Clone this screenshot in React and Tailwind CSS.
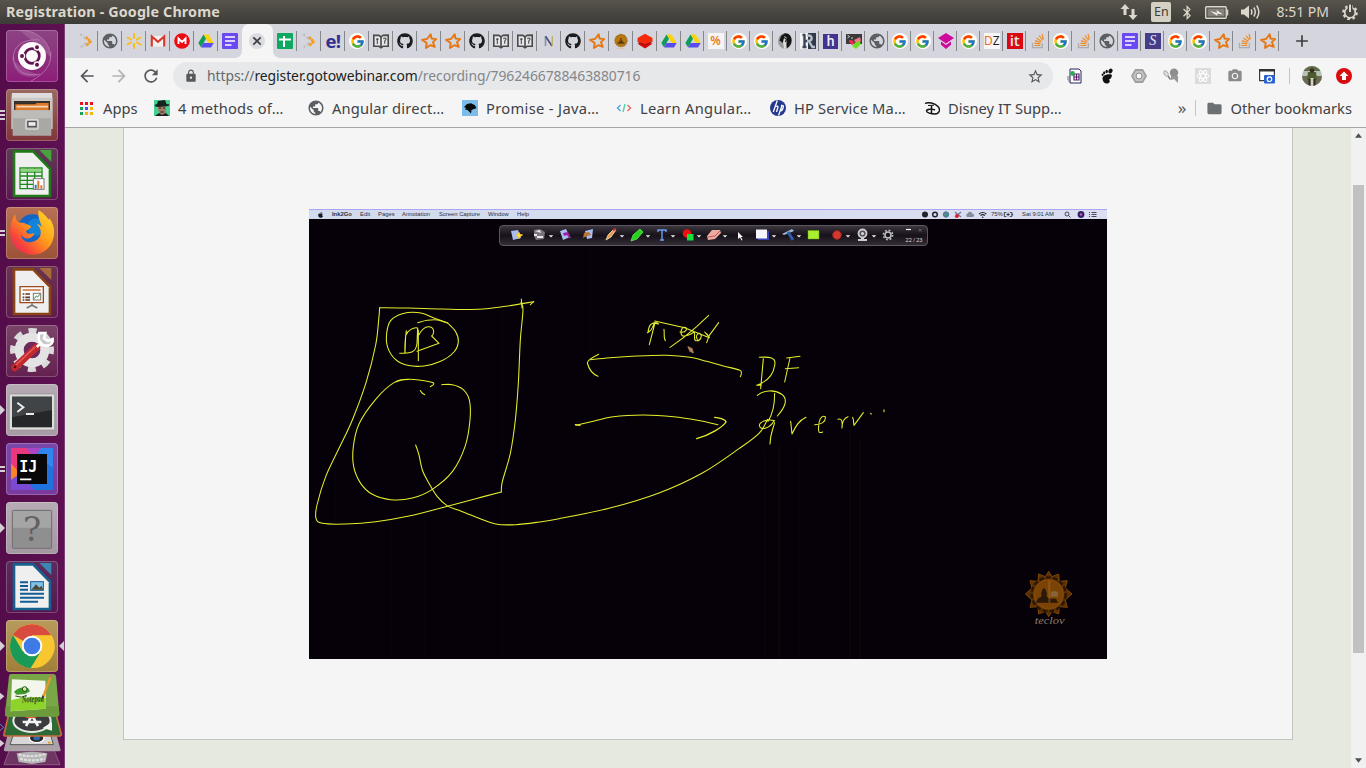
import React from "react";
import { FaGithub, FaBluetoothB } from "react-icons/fa";
import { FcGoogle } from "react-icons/fc";
import { MdPublic, MdArrowBack, MdArrowForward, MdRefresh, MdStarBorder, MdLock, MdAdd, MdFolder, MdCameraAlt } from "react-icons/md";

/* ---------- favicons ---------- */
const S = ({ children, vb = "0 0 16 16", c = "w-4 h-4" }) => (
  <svg viewBox={vb} className={c + " shrink-0"} fill="none">{children}</svg>
);
const Chevs = () => (
  <S>
    <path d="M2.500 1l2 2.200M4.200 12.800l-2 2.200M5.800 4l2.600 2.500M8.400 9.700L5.600 12.200" stroke="#b9b9bb" strokeWidth="2" strokeDasharray="2 .7" />
    <path d="M8 4l4.500 4.500L8 13" stroke="#f59a1c" strokeWidth="2.600" strokeDasharray="2.600 .5" />
  </S>
);
const Globe = () => (
  <span className="w-4 h-4 shrink-0 flex items-center justify-center"><MdPublic className="w-[18px] h-[18px] text-[#5b5f63] shrink-0" /></span>
);
const Spark = () => (
  <S>
    <g stroke="#fbbd1a" strokeWidth="2" strokeLinecap="round">
      <path d="M8 1v4M8 11v4M1.500 4.500l3.600 2M10.900 9.500l3.600 2M1.500 11.500l3.600-2M10.900 6.500l3.600-2" />
    </g>
  </S>
);
const Gmail = () => (
  <S>
    <path d="M1.500 3h13v10.500h-13z" fill="#f3f0f0" />
    <path d="M1.800 13.600V3.500L8 8.800l6.200-5.300v10.100" stroke="#d8382b" strokeWidth="2.100" />
  </S>
);
const RedM = () => (
  <S>
    <circle cx="8" cy="8" r="7.800" fill="#ee0a12" />
    <path d="M4.500 11V5.600L8 9l3.500-3.400V11" stroke="#fff" strokeWidth="1.900" />
  </S>
);
const Drive = () => (
  <S>
    <path d="M5.500 1.500h5L15.700 10h-5z" fill="#fbd20b" />
    <path d="M5.500 1.500L8 5.800 3 14.300.3 10z" fill="#0f9d58" />
    <path d="M5.400 10h10.300L13 14.400H3z" fill="#5b4cf0" />
  </S>
);
const Doc = () => (
  <S>
    <rect width="16" height="16" rx="1" fill="#6a48f2" />
    <path d="M3 4h10M3 8h10M3 12h6.500" stroke="#fff" strokeWidth="1.700" />
  </S>
);
const Sheet = () => (
  <S>
    <rect width="16" height="16" rx="1" fill="#0fa860" />
    <path d="M2 6.500h12M7 3v11" stroke="#fff" strokeWidth="2" />
  </S>
);
const Eb = () => <span className="text-[18.500px] leading-4 font-bold text-[#33308f] font-['Open_Sans',sans-serif] tracking-[-0.5px]">e!</span>;
const G = () => (
  <span className="w-4 h-4 rounded-full bg-white flex items-center justify-center shrink-0"><FcGoogle className="w-[15px] h-[15px]" /></span>
);
const Book = () => (
  <S>
    <path d="M.8 2.200l5.200.2 2 1.600 2-1.600 5.200-.2v11l-5.200.1-2 1.500-2-1.500-5.200-.1z" fill="#e7e7ea" stroke="#4a4a4a" strokeWidth="1.600" />
    <path d="M8 4v10.500" stroke="#4a4a4a" strokeWidth="1.600" /><path d="M4.300 5v6M3 6.300h2.600M10.500 6c.6-1.500 2.500-1.200 2.500 0s-1.500 1.300-1.300 3v1.800" stroke="#4a4a4a" strokeWidth="1.100" />
  </S>
);
const Git = () => <FaGithub className="w-4 h-4 text-[#1b1b1d] shrink-0" />;
const Star = () => (
  <S>
    <path d="M9.700 1.300l.8 4.200 4.700.6-3.300 3 1.900 4.800-4.500-1.700-4.300 2.800.7-5L1 6.900l5-.9z" stroke="#e67612" strokeWidth="1.900" strokeLinejoin="round" />
  </S>
);
const NIcon = () => (
  <S>
    <path d="M4.500 13V3.200" stroke="#8d93ab" strokeWidth="1.700" />
    <path d="M4.500 3.200L11 13" stroke="#4a5078" strokeWidth="1.700" />
    <path d="M11.300 13V3" stroke="#bfae6e" strokeWidth="1.400" />
  </S>
);
const Lotus = () => (
  <S>
    <circle cx="8" cy="7.500" r="5.900" fill="#b9780f" stroke="#a06d1c" strokeWidth="1.500" strokeDasharray="1.600 .5" />
    <path d="M4.500 10h7M8 5v3.500M6 8.500h4" stroke="#5a3c0c" strokeWidth="1.300" /><path d="M4 15.300h8" stroke="#d9c59a" />
  </S>
);
const RedStack = () => (
  <S>
    <path d="M8 7.500l7.500 3.200L8 15.500.5 10.700z" fill="#d90909" />
    <path d="M8 .8L15.500 5v3L8 11.500.5 8V5z" fill="#f52a0b" />
    <path d="M.5 8.500l7.500 3.600 7.500-3.600" stroke="#8f1212" strokeWidth=".9" />
  </S>
);
const Pct = () => (
  <span className="w-4 h-4 bg-[#f5f5f5] text-[#f07a14] text-[12px] leading-4 font-semibold text-center font-['Noto_Sans',sans-serif] shrink-0 flex justify-center">%</span>
);
const Head = () => (
  <S>
    <ellipse cx="8" cy="8" rx="7" ry="7.800" fill="#9a9a9c" />
    <path d="M8 .3c4.500 0 7 3.500 6.500 7.700-.3 3-2 5.500-4.500 7.200L8.500 9 6 10 2.500 7.500 4 3z" fill="#141414" />
    <path d="M7.500 3l2.500 2-1 10.500-2 .2L6 9z" fill="#dcdcdc" /><path d="M7 4.500l2.500 1.500-1 3" stroke="#222" strokeWidth="1.300" />
  </S>
);
const RIcon = () => (
  <S>
    <path d="M0 0h8v16H0z" fill="#f3f3f3" /><path d="M8 0h8v16H8z" fill="#2f3a4c" />
    <path d="M2.500 2h3M2.500 14h4M4.500 2v12M4.500 8h4" stroke="#39465a" strokeWidth="2.400" />
    <path d="M7 2.500h1.500c4.500 0 4 5.500 0 5.500H7M9 8.500l3.500 5.500h2.500" stroke="#b9c0c9" strokeWidth="2.300" />
  </S>
);
const HIcon = () => <span className="w-[15px] h-[15px] shrink-0 bg-[#43358f] text-[#f3effa] text-[14px] leading-[15px] text-center font-medium font-['Roboto',sans-serif]">h</span>;
const Pix = () => (
  <S>
    <rect width="16" height="10" y="1" fill="#3a3a3c" />
    <path d="M1.500 2l2 1.500-2 1.500M5 5h2" stroke="#ddd" strokeWidth=".9" />
    <path d="M8 7l6-3 1 4-4 4z" fill="#ee7a84" />
    <path d="M3 7l3 0 3 3-3 2-3-3z" fill="#f1274c" />
    <path d="M9 10l4-2 2 3-5 5-4-3z" fill="#6be11e" />
  </S>
);
const Pink = () => (
  <S>
    <path d="M8 0l8 5-8 5.500L0 5z" fill="#cd0a9c" />
    <path d="M3 8.500l5 3.400 5-3.400v3.200L8 16l-5-4.300z" fill="#cd0a9c" />
  </S>
);
const DZ = () => (
  <span className="w-4 h-4 shrink-0 bg-[#f6f6f6] text-[12px] leading-4 text-[#222] flex justify-center font-['Noto_Sans',sans-serif]"><span className="text-[#f26a1b]">D</span>Z</span>
);
const It = () => <span className="w-4 h-4 shrink-0 bg-[#da0812] text-[#e6e6e6] text-[15px] leading-[15px] font-semibold text-center font-['Open_Sans',sans-serif]">it</span>;
const SO = () => (
  <S>
    <path d="M2.500 10v4.600h9.800V10" stroke="#a9adb3" strokeWidth="1.300" />
    <path d="M4.300 12.500h6M4.400 10.200l6 .7M5 7.600l5.600 1.900M6.500 5l5 3.400M9 2.500l3.600 4.600M12 1l1.400 5.400" stroke="#ef8b22" strokeWidth="1.200" />
  </S>
);
const SIcon = () => <span className="w-4 h-4 shrink-0 bg-[#443d87] text-[#ece9f6] text-[14px] leading-[15px] italic text-center font-['Liberation_Serif',serif]">S</span>;

const tabsA = [Chevs, Globe, Spark, Gmail, RedM, Drive, Doc];
const tabsB = [Sheet, Chevs, Eb, G, Book, Git, Star, Star, Git, Book, Book, NIcon, Git, Star, Lotus, RedStack, Drive];
const tabsC = [Drive, Pct, G, G, Head, RIcon, HIcon, Pix, Globe, G, G, Pink, G, DZ, It, SO, G, SO, Globe, Doc, SIcon, G, G, Star, SO, Star];

const Tab = ({ I, w, last }) => (
  <div className={"h-5 flex items-center shrink-0 justify-center border-r pl-px " + w + (last ? " border-transparent" : " border-[#85878b]")}><I /></div>
);

function TabStrip() {
  return (
    <div className="h-[34px] bg-[#d5d6dd] flex items-center pl-[9px] shrink-0">
      {tabsA.map((I, i) => <Tab key={i} I={I} w="w-[24px]" last={i === 6} />)}
      <div className="w-[31px] h-[34px] relative flex items-center justify-center bg-[#f5f5f5] rounded-t-[7px]">
        <svg className="absolute -left-[7px] bottom-0 w-[7px] h-[7px]" viewBox="0 0 7 7"><path d="M7 0v7H0a7 7 0 0 0 7-7z" fill="#f5f5f5" /></svg>
        <svg className="absolute -right-[7px] bottom-0 w-[7px] h-[7px]" viewBox="0 0 7 7"><path d="M0 0v7h7a7 7 0 0 1-7-7z" fill="#f5f5f5" /></svg>
        <span className="w-4 h-4 rounded-full bg-[#dcdde0] flex items-center justify-center mr-px">
          <S c="w-[10px] h-[10px]" vb="0 0 10 10"><path d="M1.300 1.300l7.400 7.400M8.700 1.300L1.300 8.700" stroke="#3f4246" strokeWidth="1.700" /></S>
        </span>
      </div>
      {tabsB.map((I, i) => <Tab key={i} I={I} w="w-[24px]" />)}
      {tabsC.map((I, i) => <Tab key={i} I={I} w="w-[23.020px]" />)}
      <MdAdd className="w-[20px] h-[20px] text-[#3b3e42] ml-[13px]" />
    </div>
  );
}

function Toolbar() {
  return (
    <div className="h-9 flex items-center shrink-0 text-[#55585c]">
      <MdArrowBack className="w-5 h-5 ml-[12px]" />
      <MdArrowForward className="w-5 h-5 ml-[12px] text-[#b3b4b6]" />
      <MdRefresh className="w-5 h-5 ml-[12px]" />
      <div className="ml-[12px] w-[880px] h-7 rounded-full bg-[#e7e8ea] flex items-center">
        <MdLock className="w-[14px] h-[14px] ml-[11px]" />
        <div className="ml-[9px] text-[13.900px] tracking-[-0.060px] leading-7 text-[#83868a] flex-1 whitespace-nowrap">
          <span className="text-[#66696e]">https://</span><span className="text-[#1d1f22]">register.gotowebinar.com</span>/recording/7962466788463880716
        </div>
        <MdStarBorder className="w-[17px] h-[17px] mr-[9px]" />
      </div>
      <div className="flex items-center gap-4 ml-[14px]">
        <S>
          <path d="M3 1h9l2 2v12H3z" fill="#fff" stroke="#26265e" />
          <path d="M7 6h5v6H7zM9.500 6v6M7 9h5" stroke="#5a1d6e" strokeWidth="1.200" />
          <circle cx="5.500" cy="5.500" r="2.400" fill="#2fa65a" /><path d="M0 9h4M0 11h3M1 13h3" stroke="#777" />
        </S>
        <S>
          <ellipse cx="3.600" cy="6.800" rx="1" ry="1.200" fill="#111" /><ellipse cx="5.200" cy="4.800" rx="1.100" ry="1.500" fill="#111" />
          <ellipse cx="7.700" cy="3.500" rx="1.200" ry="1.700" fill="#111" /><ellipse cx="11.500" cy="3" rx="2" ry="2.500" transform="rotate(25 11.500 3)" fill="#111" />
          <path d="M12.500 6.500C9 5.500 3.500 7 3.500 10.500S6 16 8.500 15.500s3-2.800 1.200-4c2 .2 4-3.500 2.800-5z" fill="#111" />
        </S>
        <S><path d="M4 1h8l4 7-4 7H4L0 8z" fill="#9f9f9f" /><path d="M5 3h6l3 5-3 5H5L2 8z" fill="#c4c4c4" /><circle cx="8" cy="8" r="3" fill="#f5f5f5" stroke="#8c8c8c" /></S>
        <S><circle cx="11" cy="4.800" r="4.200" fill="#8e8e8e" /><path d="M8 8l7 0v7l-4-4-3 1z" fill="#979797" /><ellipse cx="3" cy="5.500" rx="1.700" ry="3" transform="rotate(-35 3 5.500)" fill="#e2e2e2" stroke="#a9a9a9" /><path d="M5 8l2.500 3.500" stroke="#777" strokeWidth="1.300" /></S>
        <S>
          <rect width="16" height="16" fill="#dcdcdc" />
          <g stroke="#fff"><ellipse cx="8" cy="8" rx="6" ry="2.300" /><ellipse cx="8" cy="8" rx="6" ry="2.300" transform="rotate(60 8 8)" /><ellipse cx="8" cy="8" rx="6" ry="2.300" transform="rotate(120 8 8)" /></g>
        </S>
        <MdCameraAlt className="w-4 h-4 text-[#8b8b8b]" />
        <S><path d="M.6 1.600h14.800v11H.6z" fill="#fff" stroke="#3c3c3c" strokeWidth="1.200" /><path d="M0 1h16v2.500H0z" fill="#333" /><rect x="5" y="7" width="11" height="8.500" rx="1" fill="#2c62d0" /><circle cx="10.500" cy="11.200" r="2.300" stroke="#fff" strokeWidth="1.200" /></S>
      </div>
      <div className="w-px h-4 bg-[#c3c4c6] ml-[14px]" />
      <S c="w-5 h-5 ml-[12px]" vb="0 0 20 20">
        <clipPath id="av"><circle cx="10" cy="10" r="10" /></clipPath>
        <g clipPath="url(#av)"><rect width="20" height="20" fill="#b4c0b4" /><path d="M0 10h20v10H0z" fill="#6b6b55" /><path d="M0 0h20v5H0z" fill="#5f6d48" /><path d="M6 6h8l1 8H5z" fill="#4e5a30" /><circle cx="10" cy="4.500" r="2.300" fill="#3d2c20" /><path d="M8.500 12h3v8h-3z" fill="#d6cfc0" /><path d="M6.500 13h2v7h-2zM11.500 13h2v7h-2z" fill="#33302a" /></g>
      </S>
      <S c="w-4 h-4 ml-[14px]"><circle cx="8" cy="8" r="8" fill="#d90d10" /><path d="M8 3.500l4.500 4.500H10v4H6V8H3.500z" fill="#fff" /></S>
    </div>
  );
}

const Man = () => (
  <S><rect width="16" height="16" fill="#45d093" /><path d="M4 5h8v8l-3 2-3-1-2-4z" fill="#a17c68" /><path d="M4 1l7-1 1.500 4 3 .5-1 1.500-10 1-3-.5-1-1.500 2.500-1z" fill="#16241f" /><path d="M5 8h2M9 8h2M6.500 12h3" stroke="#2d1a14" /><path d="M1 16l4-3 3 2 4-2 3 3z" fill="#1e1e22" /></S>
);
const Moz = () => (
  <S><rect width="16" height="16" fill="#7cbcea" /><path d="M2 7l3-3 4-.7 4 2 1.500 3-2.500.7-2.500 1-.5 3.500-3.500-3.500L3 9.500l1-1.500z" fill="#0a0a0a" /></S>
);
const Code = () => (
  <S><path d="M4.500 5L1.500 8l3 3" stroke="#49a7e0" strokeWidth="1.400" /><path d="M9 4l-2 8" stroke="#45d3a5" strokeWidth="1.300" /><path d="M11.500 5l3 3-3 3" stroke="#f0656c" strokeWidth="1.400" /></S>
);
const HP = () => (
  <S><circle cx="8" cy="8" r="8" fill="#26388f" /><path d="M7.300.5L3.300 12M5.300 6.500c2.500-1 3-.3 2.500 1.200L6.500 12M8.500 15.500L12 5.500M11 5.500c3-.4 2.600.8 2 2.700s-1 3-3.500 2.800" stroke="#fff" strokeWidth="1.300" /></S>
);
const Disney = () => (
  <S c="w-4 h-4 relative top-px"><path d="M1 2.500C4 .8 11 2 14 5.500s1 7.500-3 7.500-8.500-1.200-8.500-3S8 7.500 11 9" stroke="#111" strokeWidth="1.400" /><path d="M7.500 5v8" stroke="#111" strokeWidth="1.500" /><path d="M4 4.500l6-.3" stroke="#111" /></S>
);
const marks = [
  [Man, "4 methods of…", "tracking-[0.230px]"], [Globe, "Angular direct…", "tracking-[0.200px]"], [Moz, "Promise - Java…", "tracking-[0.330px]"],
  [Code, "Learn Angular…", "tracking-[0.300px]"], [HP, "HP Service Ma…", "tracking-[0.150px]"], [Disney, "Disney IT Supp…", ""],
];
const appColors = ["#e8121d", "#e8121d", "#e8121d", "#10a458", "#5a4bf0", "#f3b70a", "#10a458", "#f3b70a", "#f3b70a"];

function Bookmarks() {
  return (
    <div className="h-[34px] border-b border-[#a5a6a6] flex items-center pb-[5px] text-[14.700px] text-[#3f4247] shrink-0 whitespace-nowrap pl-[15px] pr-[14px]">
      <svg viewBox="0 0 13 13" className="w-[13px] h-[13px]">
        {appColors.map((c, i) => <rect key={i} x={(i % 3) * 5} y={Math.floor(i / 3) * 5} width="3" height="3" fill={c} />)}
      </svg>
      <span className="ml-[10px] w-[51px]">Apps</span>
      {marks.map(([I, t, tr]) => (
        <div key={t} className="w-[154px] flex items-center gap-2 shrink-0"><I /><span className={tr}>{t}</span></div>
      ))}
      <span className="ml-auto text-[17px] leading-4 text-[#55585c]">»</span>
      <span className="w-px h-4 bg-[#c3c4c6] ml-[9px]" />
      <MdFolder className="w-[17px] h-[17px] ml-[10px] text-[#6c7074]" />
      <span className="ml-[7px]">Other bookmarks</span>
    </div>
  );
}

/* ---------- top panel ---------- */
function Panel() {
  return (
    <div className="h-6 shrink-0 bg-gradient-to-b from-[#57544c] to-[#3d3b37] flex items-center text-[#dcd7cc] pl-[6px] pr-[8px]">
      <span className="text-[14.300px] font-bold leading-6 tracking-[0.150px]">Registration - Google Chrome</span>
      <div className="ml-auto flex items-center">
        <S c="w-[18px] h-4" vb="0 0 18 16"><path d="M5 0l4.500 5h-3v6h-3V5h-3zM13 16l-4.500-5h3V5h3v6h3z" fill="#dcd7cc" /></S>
        <span className="ml-[13px] w-5 h-5 rounded-[2px] bg-[#d5d0c4] text-[#3f3d38] text-[12.500px] leading-5 text-center">En</span>
        <FaBluetoothB className="w-[14px] h-[15px] ml-[9px]" />
        <S c="w-[24px] h-[13px] ml-[11px]" vb="0 0 24 13"><rect x=".7" y=".7" width="20.500" height="11.600" rx="1" stroke="#dcd7cc" strokeWidth="1.400" /><rect x="2.500" y="2.500" width="17" height="8" fill="#85827a" /><path d="M22.500 3.500v6" stroke="#dcd7cc" strokeWidth="1.500" /><path d="M5 5l7 2-.5-3L18 8.500l-6-1 .5 2.500z" fill="#f4f1ea" /></S>
        <S c="w-[20px] h-[16px] ml-[12px]" vb="0 0 20 16"><path d="M0 5.500h3L8 1.500v13L3 10.500H0z" fill="#dcd7cc" /><path d="M10 5.500q1.800 2.500 0 5M12.800 3.500q3 4.500 0 9M15.700 1.500q4.300 6.500 0 13" stroke="#dcd7cc" strokeWidth="1.500" /></S>
        <span className="ml-[15px] text-[14px] leading-6 whitespace-nowrap">8:51 PM</span>
        <S c="w-4 h-4 ml-[13px]"><circle cx="8" cy="8.500" r="6.700" stroke="#dcd7cc" strokeWidth="2.200" strokeDasharray="2.630 2.630" /><circle cx="8" cy="8.500" r="5.300" stroke="#dcd7cc" strokeWidth="1.700" /><path d="M8 0v8" stroke="#45433e" strokeWidth="4.600" /><path d="M8 .5V8" stroke="#dcd7cc" strokeWidth="2" /></S>
      </div>
    </div>
  );
}

/* ---------- launcher ---------- */
const Tile = ({ bg, pips = 0, active, children }) => (
  <div className="w-[65px] h-[52px] flex items-center shrink-0">
    <div className="w-[6px] flex flex-col items-start gap-[2px]">
      {pips === 1 && <svg className="w-[5px] h-[10px]" viewBox="0 0 5 10"><path d="M0 0l5 5-5 5z" fill="#d4cfd4" /></svg>}
      {pips > 1 && Array.from({ length: pips }, (_, i) => <i key={i} className="block w-[5px] h-[2px] bg-[#d4cfd4]" />)}
    </div>
    <div className={"w-[52px] h-[52px] rounded-[4px] overflow-hidden shadow-[inset_0_0_0_1px_rgba(255,255,255,.22)] " + bg}>
      <svg viewBox="0 0 156 156" className="w-[52px] h-[52px]" fill="none">{children}</svg>
    </div>
    {active && <svg className="w-[5px] h-[10px] ml-[1px]" viewBox="0 0 5 10"><path d="M5 0L0 5l5 5z" fill="#d4cfd4" /></svg>}
  </div>
);

const Launcher = () => (
  <div className="w-[65px] shrink-0 bg-gradient-to-r from-[#540c4a] to-[#5e1152] border-r border-[#7a4272] flex flex-col gap-[7px] pt-[6px]">
    <Tile bg="bg-gradient-to-b from-[#8b4383] to-[#8d1c7a]">
      <path d="M36 0C90 0 130 30 134 80M134 66c4 40-20 66-60 88M22 92C18 50 50 26 100 30M22 80c4 50 40 60 80 52" stroke="#c58dbd" strokeWidth="3" opacity=".65" />
      <path d="M40 0C100 4 134 40 132 80L110 60zM22 92C22 130 60 150 100 136L60 120z" fill="#c58dbd" opacity=".3" />
      <circle cx="78" cy="78" r="42" fill="#fbf9fa" />
      <circle cx="78" cy="78" r="22" stroke="#5d1450" strokeWidth="8" />
      <g stroke="#fbf9fa" strokeWidth="4" fill="#5d1450"><circle cx="48" cy="78" r="8" /><circle cx="93" cy="52" r="8" /><circle cx="93" cy="104" r="8" /></g>
    </Tile>
    <Tile bg="bg-gradient-to-b from-[#9b6a62] to-[#80343a]" pips={3}>
      <path d="M18 12h120l2 18v90H16V30z" fill="#c9c8c5" /><path d="M18 12h120v14H18z" fill="#dedddb" /><path d="M24 36h108v30H24z" fill="#3a302b" />
      <path d="M28 46h60l4-4h36v24H28z" fill="#dd7a2c" /><path d="M32 53h94" stroke="#f6d7b5" strokeWidth="5" />
      <path d="M20 64h116v76H20z" fill="#a9a8a5" /><path d="M20 64h116v24H20z" fill="#bdbcb9" />
      <rect x="60" y="92" width="36" height="28" rx="4" stroke="#d9d9d7" strokeWidth="5" fill="#8f8e8c" /><rect x="66" y="98" width="24" height="14" fill="#eee" stroke="#444" strokeWidth="3" />
    </Tile>
    <Tile bg="bg-gradient-to-b from-[#5f3a55] to-[#5c1552]">
      <path d="M20 6h62l54 54v88H20z" fill="#1d7a17" /><path d="M28 14h52l48 50v76H28z" fill="#efefef" /><path d="M100 6h36v36z" fill="#46a43a" />
      <path d="M42 60h66v62H42zM42 72h66M42 84h66M42 97h66M42 109h66M64 60v62M86 60v62" stroke="#1c8a1c" strokeWidth="4" /><path d="M44 62h62v9H44z" fill="#8fd67f" />
      <rect x="82" y="92" width="32" height="32" fill="#fff" stroke="#777" strokeWidth="3" /><path d="M97 122V98M106 122v-10" stroke="#e0762c" strokeWidth="6" /><path d="M89 122v-12" stroke="#2f7cc2" strokeWidth="6" />
    </Tile>
    <Tile bg="bg-gradient-to-b from-[#b87155] to-[#9b5338]" pips={2}>
      <defs><linearGradient id="ff" x1="1" y1="0" x2="0" y2="1"><stop stopColor="#ffe226" /><stop offset=".45" stopColor="#ff9a1d" /><stop offset=".75" stopColor="#f9433b" /><stop offset="1" stopColor="#d81a78" /></linearGradient></defs>
      <circle cx="80" cy="68" r="46" fill="#1166c8" /><circle cx="90" cy="60" r="26" fill="#14a0e8" opacity=".5" />
      <path d="M28 22c0 14 4 20 8 24l18 2 22 10c-4 10-14 10-16 16 4 8 20 8 26 4-8 22-34 22-40 4-2 26 40 34 56 6 6-16 0-28-10-38 12 4 14 8 16 10-8-22-14-34-10-50 10 4 26 22 30 28l2-4c20 24 16 58 6 76-22 38-72 44-104 14C4 94 10 44 28 22z" fill="url(#ff)" />
    </Tile>
    <Tile bg="bg-gradient-to-b from-[#6a3450] to-[#5f1b4c]">
      <path d="M20 6h62l54 54v88H20z" fill="#8a4413" /><path d="M28 14h52l48 50v76H28z" fill="#efefef" /><path d="M100 6h36v36z" fill="#a86b3d" />
      <path d="M42 62h70v48H42z" fill="#fbfbfb" stroke="#a04a1a" strokeWidth="4" /><path d="M50 72h54" stroke="#c8703a" strokeWidth="5" /><path d="M50 84h22M50 94h22M50 102h22" stroke="#5a3626" strokeWidth="5" strokeDasharray="5 3 14" /><rect x="82" y="82" width="22" height="20" stroke="#777" strokeWidth="3" /><path d="M85 98l6-8 4 3 6-8" stroke="#27953a" strokeWidth="3" /><path d="M78 112v6L62 126M78 118l16 8" stroke="#777" strokeWidth="5" />
    </Tile>
    <Tile bg="bg-gradient-to-b from-[#7a4568] to-[#642050]">
      <circle cx="78" cy="75" r="57" stroke="#dadada" strokeWidth="18" strokeDasharray="24 20.760" strokeDashoffset="12" /><circle cx="78" cy="75" r="38" stroke="#e3e3e3" strokeWidth="28" /><circle cx="78" cy="75" r="25" fill="#6d2b5c" />
      <path d="M26 128l66-62" stroke="#c3282c" strokeWidth="21" strokeLinecap="round" /><path d="M30 120l58-55" stroke="#e25a58" strokeWidth="5" />
      <path d="M92 66l16-14M100 24c-6 20 2 38 22 38 12 0 20-10 18-20l-14 6-12-8 4-16z" stroke="#fff" strokeWidth="8" fill="#c8c8c8" /><circle cx="27" cy="126" r="4" fill="#5e0c10" />
    </Tile>
    <Tile bg="bg-gradient-to-b from-[#b6a9b3] to-[#a79ba6]" pips={1}>
      <rect x="10" y="30" width="136" height="108" rx="4" fill="#dcdcdc" stroke="#8f8f8f" strokeWidth="2" /><rect x="18" y="38" width="120" height="92" fill="#252729" /><path d="M18 38h120v40L18 100z" fill="#414446" />
      <path d="M34 56l18 14-18 14M60 90h24" stroke="#ececec" strokeWidth="6" />
    </Tile>
    <Tile bg="bg-gradient-to-b from-[#7a48aa] to-[#7a3a9c]" pips={2}>
      <path d="M15 15h126v126H15z" fill="#1f72df" /><path d="M15 15h80L60 80 15 120z" fill="#e9387e" /><path d="M15 62l30 30-30 30z" fill="#f98426" /><path d="M15 110l30-20 40 51H15z" fill="#7a4ad2" /><path d="M100 15h41v60L95 40z" fill="#2f86f0" /><path d="M60 15h45l-20 30z" fill="#a946c4" />
      <rect x="33" y="33" width="90" height="90" fill="#080808" /><path d="M42 109h34" stroke="#fff" strokeWidth="5" />
      <text x="40" y="86" fontSize="50" fontWeight="bold" fontFamily="DejaVu Sans Mono, monospace" fill="#fff" textLength="54" lengthAdjust="spacingAndGlyphs">IJ</text>
    </Tile>
    <Tile bg="bg-gradient-to-b from-[#b7abb5] to-[#a398a1]" pips={1}>
      <rect x="19" y="25" width="118" height="114" rx="3" fill="#8f8f8f" stroke="#6f6f6f" strokeWidth="3" /><path d="M21 27h114v50H21z" fill="#a5a5a5" />
      <text x="78" y="117" textAnchor="middle" fontSize="102" fontFamily="DejaVu Serif, serif" fill="#616161">?</text>
    </Tile>
    <Tile bg="bg-gradient-to-b from-[#5c2c5e] to-[#561650]">
      <path d="M20 6h62l54 54v88H20z" fill="#16608f" /><path d="M28 14h52l48 50v76H28z" fill="#efefef" /><path d="M100 6h36v36z" fill="#3c86b4" />
      <path d="M42 64h24M42 75h24M42 86h24M42 98h72M42 110h72M42 122h54" stroke="#145c94" strokeWidth="6" /><rect x="74" y="62" width="38" height="26" fill="#7fc1e8" stroke="#145c94" strokeWidth="3" /><path d="M76 86l14-16 10 10 6-6 6 12z" fill="#4c4a32" />
    </Tile>
    <Tile bg="bg-gradient-to-b from-[#b79a5c] to-[#a17f38]" pips={1} active>
      <circle cx="78" cy="78" r="66" fill="#f8c62f" /><path d="M78 78L21 45A66 66 0 0 1 135 46L78 46z" fill="#d84b3e" /><path d="M21 45A66 66 0 0 0 74 144L106 94 78 78 50 94z" fill="#1a9a57" /><path d="M78 47h60A66 66 0 0 1 76 144L105 94z" fill="#f8c62f" />
      <circle cx="78" cy="78" r="31" fill="#fff" /><circle cx="78" cy="78" r="25" fill="#3e7be4" />
    </Tile>
    <svg viewBox="0 528 195 282" className="w-[65px] h-[94px] -mt-[5px] shrink-0" fill="none">
      <path d="M28 756h134l18 44H12z" fill="#6e3562" stroke="#8d5b84" strokeWidth="3" /><path d="M50 766q46-10 92 0l-6 26-40 6-40-6z" fill="#b4b4b4" /><path d="M56 770q40 10 80-2M60 782q36 10 74 0" stroke="#dedede" strokeWidth="7" strokeDasharray="9 3" />
      <path d="M24 706h144l14 50q0 4-6 4H16q-6 0-4-6z" fill="#aba2a8" /><path d="M40 710h112l8 30H30z" fill="#d8d6d6" stroke="#555" strokeWidth="3" /><ellipse cx="110" cy="720" rx="22" ry="14" fill="#282828" stroke="#fff" strokeWidth="4" /><ellipse cx="110" cy="720" rx="10" ry="7" fill="#2b68a8" /><path d="M144 734h8" stroke="#e5a020" strokeWidth="5" />
      <path d="M26 650h142l16 58q0 6-6 6H16q-6 0-4-6z" fill="#2d6a35" stroke="#c96a3d" strokeWidth="5" /><ellipse cx="96" cy="668" rx="56" ry="34" fill="#3b3b3d" stroke="#e9e9e9" strokeWidth="6" /><path d="M78 684l18-32 18 32M68 672h56" stroke="#f2f2f2" strokeWidth="8" /><path d="M76 660l14-14 20 14z" fill="#e2582e" /><path d="M128 690l28-18v26z" fill="#f2f2f2" />
      <path d="M34 528h126q6 0 8 6l10 114q0 8-8 8H22q-8 0-7-8l12-114q1-6 7-6z" fill="#79a646" /><path d="M15 645l2-20h159l2 20q0 10-8 10H22q-7 0-7-10z" fill="#6b9b3b" />
      <path d="M36 544l100 4 2 84-106 8z" fill="#f3f6ea" /><path d="M34 606q50-14 103-6l1 32-106 8z" fill="#8ed32a" /><path d="M42 582q14-18 42-12l6 10-14 8-26 2z" fill="#3f9a2c" /><circle cx="74" cy="573" r="7" fill="#cdf0a5" stroke="#264e17" strokeWidth="3" /><path d="M46 594q20 8 34-2" stroke="#264e17" strokeWidth="3" />
      <text x="66" y="614" fontSize="30" fontStyle="italic" fontWeight="bold" fontFamily="Liberation Serif, serif" fill="#1e4a22" textLength="66" lengthAdjust="spacingAndGlyphs" transform="rotate(-3 66 614)">Notepad</text>
      <path d="M152 536L130 596" stroke="#e29a2e" strokeWidth="7" /><path d="M148 534l8 4" stroke="#e06a50" strokeWidth="7" /><path d="M127 592l-3 14 9-10z" fill="#333" />
      <path d="M0 584l13 11-13 11zM0 725l13 11-13 11z" fill="#d4cfd4" /><path d="M0 678l11 10-11 10" stroke="#4c8fd0" strokeWidth="3" />
    </svg>
  </div>
);

/* ---------- recorded video frame ---------- */
const Caret = ({ x }) => <path d={`M${x - 2.3} 9.300h4.600l-2.300 2.300z`} fill="#f0f0f0" />;

/* Smooth stroke through a flat list of points. */
function curve(p) {
  const n = p.length / 2;
  const at = (i) => { const k = Math.max(0, Math.min(n - 1, i)); return [p[2 * k], p[2 * k + 1]]; };
  let d = `M${p[0]} ${p[1]}`;
  for (let i = 0; i < n - 1; i++) {
    const [a, b, c, e] = [at(i - 1), at(i), at(i + 1), at(i + 2)];
    d += `C${b[0] + (c[0] - a[0]) / 6} ${b[1] + (c[1] - a[1]) / 6} ${c[0] - (e[0] - b[0]) / 6} ${c[1] - (e[1] - b[1]) / 6} ${c[0]} ${c[1]}`;
  }
  return d;
}
const Stroke = ({ p }) => <path d={curve(p)} />;

function Video() {
  return (
    <div className="w-[798px] h-[450px] bg-[#060008] flex flex-col relative overflow-hidden font-['Liberation_Sans',sans-serif]">
      <div className="h-[10px] shrink-0 border-t border-[#aaa6f4] bg-gradient-to-r from-[#d2dbee] to-[#dadef0] flex items-center text-[5.850px] leading-[9px] text-[#2a2f3e] pl-[9px] pr-[9px] whitespace-nowrap">
        <S c="w-[5px] h-[6px]" vb="0 0 10 12"><path d="M5 3.500C2 2 0 4 .5 7S3 12 5 11.300C7 12 9 11 9.800 8.500 8 7.500 8 5 9.500 4 8.500 2.500 6.500 2.800 5 3.500zM5 3c0-2 1-3 2.500-3C7.500 1.500 6.500 3 5 3z" fill="#1a1c24" /></S>
        <b className="ml-[9px] w-[28px]">Ink2Go</b>
        <span className="w-[18px]">Edit</span><span className="w-[24px]">Pages</span><span className="w-[37px]">Annotation</span><span className="w-[49px]">Screen Capture</span><span className="w-[29px]">Window</span><span>Help</span>
        <div className="ml-auto flex items-center">
          <svg viewBox="0 0 66 9" className="w-[66px] h-[9px]" fill="none">
            <circle cx="4" cy="4.500" r="3" fill="#23252e" /><circle cx="14" cy="4.500" r="2.300" stroke="#23252e" strokeWidth="1.500" /><circle cx="25" cy="4.500" r="2.700" fill="#4a8d8c" stroke="#5a6a9b" /><path d="M34 2l6 5M40 2l-6 5" stroke="#6b73a5" strokeWidth="1.200" /><circle cx="36" cy="6" r="1.900" fill="#df1e2a" /><path d="M46 7a2 2 0 0 1 .6-3.500 2.500 2.500 0 0 1 4.800.2A1.700 1.700 0 0 1 52 7z" fill="#878c9b" /><path d="M58 4q3.700-3 7.400 0M59.500 5.500q2.200-1.700 4.400 0" stroke="#23252e" strokeWidth="1.100" /><circle cx="61.700" cy="7.200" r=".8" fill="#23252e" />
          </svg>
          <span className="ml-[4px] w-[12px]">75%</span>
          <svg viewBox="0 0 11 6" className="w-[11px] h-[5px]" fill="none"><path d="M3 .5H.5v5H3M7 .5h2.500v5H7M10.500 2v2M3 3h4M5 1v4" stroke="#23252e" /></svg>
          <span className="ml-[8px] w-[42px]">Sat 9:01 AM</span>
          <svg viewBox="0 0 34 9" className="w-[34px] h-[9px]" fill="none"><circle cx="3" cy="4" r="2" stroke="#23252e" strokeWidth=".8" /><path d="M4.500 5.500L6.500 7.500" stroke="#23252e" strokeWidth=".8" /><circle cx="17" cy="4.500" r="3.400" fill="#33226b" /><circle cx="17" cy="4.500" r="1.200" fill="#c65aa8" /><path d="M25 2.500h1M25 4.500h1M25 6.500h1M27.500 2.500h5M27.500 4.500h5M27.500 6.500h5" stroke="#23252e" strokeWidth=".8" /></svg>
        </div>
      </div>
      <div className="mt-[6px] ml-[190px] w-[429px] h-[21px] shrink-0 rounded-[4px] border border-[#5c565f] bg-gradient-to-b from-[#3b353e] from-0% via-[#17111a] via-50% to-[#332d36] flex items-center text-[5.500px] text-[#d8d8dc]">
        <svg viewBox="500 0 400 19" className="w-[400px] h-[19px] shrink-0" fill="none">
          <path d="M511 5l7-1 3 8-8 2z" fill="#a9bdf0" /><path d="M519 6.500l1 2 2.500.5-2.500 1.500-1 2-1-2-2-1.500 2-.5z" fill="#ffe24a" stroke="#f2c82c" />
          <path d="M534 4l6-1 5 3-1 7-8 1-2-4z" fill="#79737f" /><path d="M535 5l5-1 1 3zM537 10h6v2h-6zM534 8h3v2h-3z" fill="#e8e8ea" /><Caret x={551} />
          <path d="M560 5l6-2 4 8-7 3z" fill="#a9bdf0" /><path d="M563 7l5-1 3 6-2 0-2-3-3 1z" fill="#a01fa2" />
          <path d="M585 5l8-2-1 9-5 1z" fill="#a9bdf0" /><path d="M583 12l1-5 5-1 2 3-4 1z" fill="#b8742b" />
          <path d="M606 14l2-5 6-6 2 1-5 7z" fill="#e79b54" stroke="#f8dcb4" strokeWidth=".8" /><path d="M613 4l3-1" stroke="#c92e24" strokeWidth="2" /><Caret x={622} />
          <path d="M631 15l2-6 7-6 3 3-6 7z" fill="#25d321" stroke="#74ef60" strokeWidth=".7" /><Caret x={648} />
          <path d="M658 6V4h8v2M662 4v10M660 14h4" stroke="#6c9ef2" strokeWidth="1.400" /><Caret x={673} />
          <circle cx="687" cy="7.500" r="4.300" fill="#ed1010" /><rect x="687" y="8" width="6.500" height="6.500" fill="#15df3a" /><Caret x={699} />
          <path d="M707 10l5-6 8 0 1 3-6 6-7 1z" fill="#edaaa0" /><path d="M708 11l7-1 5-5" stroke="#b95a50" /><Caret x={725} />
          <path d="M738 6v7l2-1.500 1.500 3 1-.5-1.500-3h2z" fill="#f4f4f4" />
          <path d="M758 5h11v9h-11z" fill="#3542b8" /><path d="M756 3.500h11v9h-11z" fill="#f5f5fb" /><Caret x={774} />
          <path d="M782 8l10-5 2 2-10 4z" fill="#9fb6d4" /><path d="M788 6l5 8" stroke="#2c5caa" strokeWidth="3" /><Caret x={799} />
          <path d="M808 4.500h11V13h-11z" fill="#a9ef2d" stroke="#6ba21b" strokeDasharray="1 1" />
          <circle cx="837" cy="9" r="4.400" fill="#d23a2d" stroke="#8b211c" /><Caret x={848} />
          <circle cx="862.500" cy="7.500" r="4" fill="#55525b" stroke="#cdcdd0" strokeWidth="1.800" /><path d="M858 14h9" stroke="#cdcdd0" strokeWidth="2" /><path d="M862.500 11v3" stroke="#cdcdd0" strokeWidth="3" /><circle cx="862.500" cy="7.500" r="1.500" fill="#ddd" /><Caret x={874} />
          <circle cx="888" cy="9" r="3" stroke="#bdbdc0" strokeWidth="1.600" /><circle cx="888" cy="9" r="4.700" stroke="#bdbdc0" strokeWidth="1.500" strokeDasharray="1.850 1.850" />
        </svg>
        <div className="flex flex-col items-center leading-[6px] w-[20px] ml-[4px]">
          <svg viewBox="0 0 20 6" className="w-[20px] h-[6px]"><path d="M2 1.500h5" stroke="#fff" strokeWidth="1.200" /><path d="M15 1l2.500 2.500M17.500 1L15 3.500" stroke="#77717a" strokeWidth=".8" /></svg>
          <span className="mt-[3px] whitespace-nowrap">22 / 23</span>
        </div>
      </div>
      <svg className="absolute inset-0 w-[798px] h-[450px]" viewBox="309 209 798 450" fill="none">
        <g stroke="#06060e"><path d="M335 460v70M391 520v140M425 520v139M502 300v359M590 250v120M765 450v209M799 445v214" /><path d="M779 445v214M850 430v229M860 440v219" stroke="#120805" /></g>
        <g transform="translate(309 290) scale(.33333)" stroke="#e3ee2c" strokeWidth="3.200" strokeLinejoin="round" strokeLinecap="round">
          <Stroke p={[212, 53, 300, 54, 400, 57, 510, 58, 590, 49, 674, 35]} /><path d="M674 35l-10 9M637 27l2 27" />
          <Stroke p={[636, 37, 642, 60, 634, 150, 628, 280, 619, 390, 604, 490, 580, 575, 577, 606]} />
          <Stroke p={[577, 606, 500, 626, 410, 650, 300, 678, 200, 695, 110, 702, 40, 700, 21, 685, 24, 645, 50, 560, 90, 475, 130, 390, 172, 275, 200, 165, 209, 90, 212, 53]} />
          <Stroke p={[326, 98, 355, 91, 385, 90, 416, 99]} />
          <Stroke p={[416, 99, 375, 84, 332, 68, 280, 71, 245, 92, 233, 130, 236, 172, 260, 209, 295, 226, 345, 228, 395, 214, 435, 186, 448, 155, 440, 125, 416, 99]} />
          <path d="M292 122c-2 20-6 40-4 66M272 190c30 0 50 0 52-30l2-46c-12-4-30 8-36 22l-2 54M328 120v92M330 134c18-34 42-26 44-10 0 10-4 12-6 14l22 22-66 24" />
          <Stroke p={[364, 290, 374, 283, 365, 276, 300, 268, 255, 278, 200, 328, 150, 402, 133, 470, 134, 530, 155, 580, 190, 613, 245, 629, 310, 624, 370, 598, 430, 545, 468, 470, 483, 390, 481, 330, 462, 298, 430, 284, 398, 284]} />
          <path d="M334 302l6 8 7 4" />
          <Stroke p={[320, 465, 330, 495, 340, 540, 360, 580, 385, 620, 414, 647, 450, 661, 500, 681, 560, 702, 620, 704, 690, 696, 750, 686, 900, 655, 1050, 609, 1180, 549, 1290, 476, 1350, 430, 1376, 388]} />
        </g>
        <g transform="translate(560 300) scale(.33333)" stroke="#e3ee2c" strokeWidth="3.200" strokeLinejoin="round" strokeLinecap="round">
          <path d="M116 163c-16 8-34 16-34 26 6 24 18 34 32 40" /><Stroke p={[92, 179, 150, 173, 230, 168, 320, 166, 390, 172, 440, 184, 490, 198, 538, 210, 544, 220, 541, 230]} />
          <path d="M264 98c2-20 8-32 26-30l6 4-14-2c-4 16-14 28-20 28M284 72l-16 62M284 63l90 20 74 30-8-12M312 88c2 14-2 26 4 34M360 96c20 4 26-16 12-14-10 2-12 22-4 26 12 0 24-4 34-12 6 10-4 24 6 26 16 2 20-18 10-22-10 2-10 12-6 18M330 142c30-20 60-44 80-62l36-34M440 128l8-22 28-38M434 96l14 16" />
          <path d="M598 172c30-2 52 0 46 24-4 30-26 50-54 60h14M610 176l-8 90M690 174l-16 72M680 174l40-5M676 206l40-3" />
          <path d="M592 286c20-16 50-18 72-4 24 16 8 44-12 66M644 280c0 40-8 66-20 84M644 362c-20-6-44 2-46 14 4 20 34 6 44-14M644 368c-12 40-14 40-14 64M692 364l4 38c10-22 20-40 42-50M764 374c20 0 34-8 32-24-14-6-20 14-20 30-2 18 2 20 12 16M834 358c10-4 14 4 12 22M846 384c0-20 6-30 18-34M878 352c4 10 2 16 4 24l28-38M932 340l2 2M972 329v6" />
          <Stroke p={[48, 376, 90, 366, 160, 350, 250, 345, 340, 350, 420, 362, 474, 374]} /><path d="M464 352c14 0 34 8 34 14-8 14-50 40-88 50M46 374l14 2" strokeWidth="4" />
          <path d="M384 140l12 6 4 12-10-4z" fill="#b8825a" stroke="#a67a5a" />
        </g>
        <g transform="translate(1010 560) scale(.33333)">
          <path d="M116 34l10 16 20-8 2 22 24-2-6 22 20 18-20 18 6 22-24-2-2 22-20-8-10 16-10-16-20 8-2-22-24 2 6-22-20-18 20-18-6-22 24 2 2-22 20 8z" fill="#5a3005" stroke="#7d4408" strokeWidth="3" strokeLinejoin="round" />
          <circle cx="116" cy="103" r="51" stroke="#2c1603" strokeWidth="7" strokeDasharray="14 7" /><circle cx="116" cy="103" r="44" fill="#7a4305" stroke="#8a4e0c" strokeWidth="3" />
          <path d="M78 128q4-16 16-18v-12q8-26 16 0v12l10 6h18l6 12z" fill="#2a1908" /><path d="M118 62v66" stroke="#a8722a" strokeWidth="6" opacity=".45" /><path d="M122 96q10-6 22 0v14h-22z" fill="#8a795c" opacity=".6" />
          <text x="74" y="193" fontSize="34" fontStyle="italic" fontFamily="Liberation Serif, serif" fill="#8c7f66" textLength="90" lengthAdjust="spacingAndGlyphs">teclov</text>
        </g>
      </svg>
    </div>
  );
}

export default function App() {
  return (
    <div className="w-[1366px] h-[768px] overflow-hidden flex flex-col bg-[#f5f5f5] font-['Noto_Sans',sans-serif]">
      <Panel />
      <div className="flex flex-1 min-h-0">
        <Launcher />
        <div className="flex-1 min-w-0 flex flex-col">
          <TabStrip />
          <Toolbar />
          <Bookmarks />
          <div className="flex flex-1 min-h-0">
            <div className="flex-1 bg-[#e6e9df] pl-[58px] pr-[58px] pb-[28px] flex">
              <div className="flex-1 bg-[#f5f5f5] border border-t-0 border-[#c2c5bd] pt-[81px] pl-[185px]">
                <Video />
              </div>
            </div>
            <div className="w-[15px] bg-[#f1f1f1] flex flex-col items-center justify-between py-[5px] relative">
              <svg viewBox="0 0 8 5" className="w-[7px] h-[5px]"><path d="M4 0l4 5H0z" fill="#4f5052" /></svg>
              <div className="absolute top-[57px] left-[2px] w-[11px] h-[468px] bg-[#c1c1c1]" />
              <svg viewBox="0 0 8 5" className="w-[7px] h-[5px]"><path d="M4 5l4-5H0z" fill="#4f5052" /></svg>
            </div>
          </div>
        </div>
      </div>
    </div>
  );
}
